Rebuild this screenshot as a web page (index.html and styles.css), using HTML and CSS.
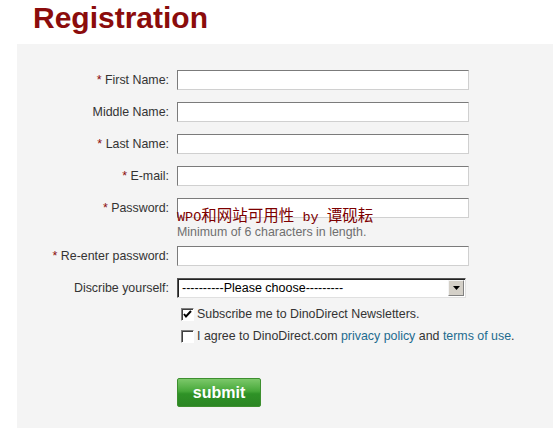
FILE: index.html
```html
<!DOCTYPE html>
<html>
<head lang="en">
    <meta charset="UTF-8">
    <title>Registration</title>
    <link rel="stylesheet" href="styles.css">
</head>
<body>

<h1 class="title">Registration</h1>

<div class="panel">
    <div class="row">
        <label class="lbl"><span class="req">*</span> First Name:</label>
        <div class="field"><span class="txt"></span></div>
    </div>
    <div class="row">
        <label class="lbl">Middle Name:</label>
        <div class="field"><span class="txt"></span></div>
    </div>
    <div class="row">
        <label class="lbl"><span class="req">*</span> Last Name:</label>
        <div class="field"><span class="txt"></span></div>
    </div>
    <div class="row">
        <label class="lbl"><span class="req">*</span> E-mail:</label>
        <div class="field"><span class="txt"></span></div>
    </div>
    <div class="row row-pwd">
        <label class="lbl"><span class="req">*</span> Password:</label>
        <div class="field">
            <span class="txt"></span>
            <p class="hint">Minimum of 6 characters in length.</p>
            <!-- 水印 -->
            <div class="mark"><span class="lat">WPO</span>和网站可用性<span class="lat"> by </span>谭砚耘</div>
        </div>
    </div>
    <div class="row">
        <label class="lbl"><span class="req">*</span> Re-enter password:</label>
        <div class="field"><span class="txt"></span></div>
    </div>
    <div class="row row-last">
        <label class="lbl">Discribe yourself:</label>
        <div class="field">
            <div class="sel">
                <span class="sel-val">----------Please choose---------</span>
                <span class="sel-btn">
                    <svg width="7" height="4" viewBox="0 0 7 4"><path d="M0 0h7L3.5 4z" fill="#000"/></svg>
                </span>
            </div>
        </div>
    </div>

    <div class="check check-first">
        <span class="box">
            <svg width="9" height="9" viewBox="0 0 9 9"><path d="M1 4l2 2.5L8 1" fill="none" stroke="#000" stroke-width="2"/></svg>
        </span>
        <span>Subscribe me to DinoDirect Newsletters.</span>
    </div>
    <div class="check">
        <span class="box"></span>
        <span>I agree to DinoDirect.com <a href="#">privacy policy</a> and <a href="#">terms of use</a>.</span>
    </div>

    <div class="actions">
        <span class="btn">submit</span>
    </div>
</div>

</body>
</html>
```

FILE: styles.css
```css
* {
    padding: 0;
    margin: 0;
}
body {
    font-family: "Liberation Sans", Arial, sans-serif;
    font-size: 12.4px;
    color: #333;
    background-color: #fff;
}
.title {
    height: 36px;
    line-height: 36px;
    margin: 0 0 8px 33px;
    font-size: 30px;
    font-weight: bold;
    color: #8b0c0c;
}
.panel {
    margin-left: 17px;
    height: 384px;
    box-sizing: border-box;
    padding-top: 26px;
    background-color: #f4f4f4;
}
.row {
    display: flex;
    margin-bottom: 12px;
}
.row-pwd {
    margin-bottom: 8px;
}
.row-last {
    margin-bottom: 0;
}
.lbl {
    width: 152px;
    padding-right: 8px;
    text-align: right;
    line-height: 20px;
}
.req {
    color: #8b0c0c;
}
.field {
    position: relative;
}
.txt {
    display: block;
    width: 292px;
    height: 20px;
    box-sizing: border-box;
    background-color: #fff;
    border: 1px solid #d0d0d0;
    border-top-color: #7b7b7b;
    border-left-color: #7b7b7b;
}
.hint {
    margin-top: 8px;
    line-height: 12px;
    color: #6f6f6f;
}
.mark {
    position: absolute;
    top: 8px;
    left: 0;
    line-height: 16px;
    font-family: "Noto Sans CJK SC", sans-serif;
    font-size: 15.5px;
    color: #7d0000;
    white-space: nowrap;
}
.mark .lat {
    font-family: "Liberation Mono", monospace;
    font-size: 13.5px;
    white-space: pre;
}
.sel {
    display: flex;
    align-items: center;
    width: 289px;
    height: 20px;
    box-sizing: border-box;
    background-color: #fff;
    border: 1px solid #e0e0e0;
    border-top-color: #555;
    border-left-color: #555;
    box-shadow: inset 1px 1px 0 #222;
}
.sel-val {
    flex: 1;
    padding-left: 4px;
    font-size: 12.5px;
    color: #000;
    line-height: 18px;
}
.sel-btn {
    display: flex;
    align-items: center;
    justify-content: center;
    width: 16px;
    height: 16px;
    margin-right: 1px;
    box-sizing: border-box;
    background-color: #d4d0c8;
    border: 1px solid #808080;
    border-top-color: #f4f4f4;
    border-left-color: #f4f4f4;
}
.check {
    display: flex;
    align-items: center;
    margin: 2px 0 0 164px;
    line-height: 20px;
    color: #333;
}
.check-first {
    margin-top: 6px;
}
.box {
    display: flex;
    align-items: center;
    justify-content: center;
    width: 13px;
    height: 13px;
    margin-right: 3px;
    box-sizing: border-box;
    background-color: #fff;
    border: 1px solid #fff;
    border-top-color: #808080;
    border-left-color: #808080;
    box-shadow: inset 1px 1px 0 #404040;
}
.check a {
    color: #1d6b8f;
    text-decoration: none;
}
.actions {
    margin: 32px 0 0 160px;
}
.btn {
    display: inline-block;
    width: 84px;
    height: 29px;
    box-sizing: border-box;
    line-height: 27px;
    text-align: center;
    font-size: 16px;
    font-weight: bold;
    color: #fff;
    border: 1px solid #3d8f2f;
    border-radius: 2px;
    background: linear-gradient(#7cc86a 0%, #47a83a 45%, #2f9227 55%, #2b8623 100%);
}
```
